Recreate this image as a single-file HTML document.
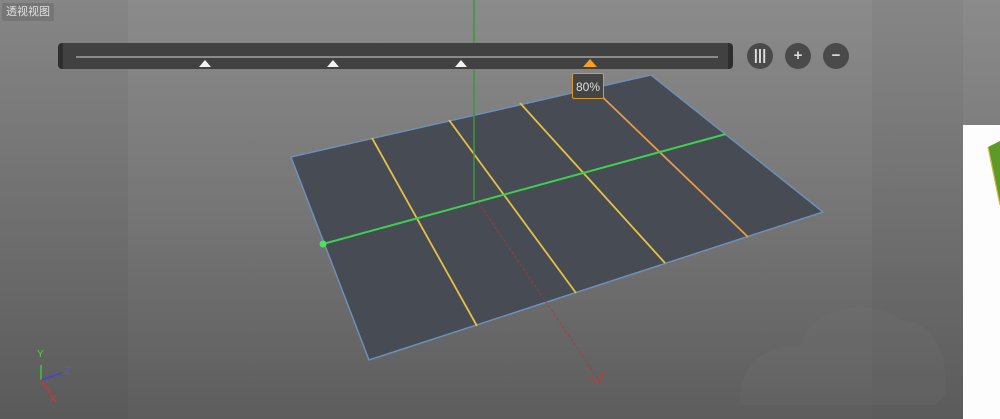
<!DOCTYPE html>
<html><head><meta charset="utf-8"><style>
html,body{margin:0;padding:0;width:1000px;height:419px;overflow:hidden}
body{position:relative;background:linear-gradient(#8b8b8b 0%,#787878 45%,#5d5d5d 100%);font-family:"Liberation Sans","Noto Sans CJK SC",sans-serif}
.lp{position:absolute;left:0;top:0;width:128px;height:419px;background:linear-gradient(#868686,#5a5a5a)}
.rp{position:absolute;left:872px;top:0;width:91px;height:419px;background:linear-gradient(#868686,#5b5b5b)}
.white{position:absolute;left:963px;top:125px;width:37px;height:294px;background:#fdfdfd}
.lbl{position:absolute;left:2px;top:3px;width:52px;height:18px;background:#767676;color:#e0e0e0;font-size:11px;line-height:18px;text-align:center;border-radius:2px}
.bar{position:absolute;left:58px;top:43px;width:675px;height:26px;background:#414141;border-radius:4px;border-left:5px solid #2e2e2e;border-right:5px solid #2e2e2e;box-sizing:border-box}
.btn{position:absolute;top:43px;width:26px;height:26px;border-radius:50%;background:#4a4a4a;color:#ddd;font-weight:bold;text-align:center;line-height:26px;font-size:15px}
.pct{position:absolute;left:572px;top:73px;width:32px;height:26px;border:1.5px solid #d99a2b;background:#444;color:#ddd;font-size:12px;line-height:26px;text-align:center;box-sizing:border-box;border-radius:2px}
</style></head><body>
<div class="lp"></div><div class="rp"></div>
<svg width="1000" height="419" style="position:absolute;left:0;top:0">
<path d="M740 400 C740 360 770 345 800 345 C815 300 880 300 900 320 C940 320 950 370 945 395 L935 405 L740 405Z" fill="#7a7a7a" opacity="0.15"/>
<polygon points="291,157 651,75 823,212 369,360" fill="#474b53" stroke="#6f8fb8" stroke-width="1.5"/>
<g stroke="#e3c046" stroke-width="1.8">
<line x1="372" y1="138" x2="477" y2="326"/>
<line x1="449" y1="120" x2="576" y2="293"/>
<line x1="520" y1="103" x2="665" y2="263"/>
</g>
<line x1="591" y1="86" x2="748" y2="237" stroke="#e79a4a" stroke-width="1.8"/>
<line x1="323" y1="244" x2="726" y2="134" stroke="#3fcf4f" stroke-width="2"/>
<circle cx="323" cy="244" r="3.5" fill="#4fe05f"/>
<line x1="474" y1="0" x2="474" y2="200" stroke="#3a9a3a" stroke-width="1.5"/>
<line x1="478" y1="202" x2="601" y2="383" stroke="#a83a3a" stroke-width="1" stroke-dasharray="3,2" opacity="0.8"/>
<path d="M590 378 L601 383 L603 372" fill="none" stroke="#c03a3a" stroke-width="1.2"/>
<line x1="41" y1="380" x2="41" y2="365" stroke="#3c3" stroke-width="1.5"/>
<text x="37" y="357" font-size="10" fill="#4d4" font-family="Liberation Sans">Y</text>
<line x1="41" y1="380" x2="62" y2="373" stroke="#44c" stroke-width="1.5"/>
<text x="64" y="374" font-size="10" fill="#55d" font-family="Liberation Sans">Z</text>
<line x1="41" y1="380" x2="52" y2="396" stroke="#c33" stroke-width="1.5"/>
<text x="50" y="402" font-size="10" fill="#d33" font-family="Liberation Sans">X</text>
</svg>
<div class="white"><svg width="37" height="100" style="position:absolute;left:0;top:0"><path d="M25 22 L37 16 L37 80 Z" fill="#5e9a28"/><path d="M25 22 L37 80" stroke="#d8b64a" stroke-width="1.2"/></svg></div>
<div class="lbl">透视视图</div>
<div class="bar"></div>
<svg width="1000" height="80" style="position:absolute;left:0;top:0">
<line x1="76" y1="57" x2="718" y2="57" stroke="#8a8a8a" stroke-width="2"/>
<polygon points="205,60 199,67 211,67" fill="#f2f2f2"/>
<polygon points="333,60 327,67 339,67" fill="#f2f2f2"/>
<polygon points="461,60 455,67 467,67" fill="#f2f2f2"/>
<polygon points="590,59 583,67 597,67" fill="#f5a020"/>
</svg>
<div class="btn" style="left:747px">|||</div>
<div class="btn" style="left:785px">+</div>
<div class="btn" style="left:823px">−</div>
<div class="pct">80%</div>
</body></html>
